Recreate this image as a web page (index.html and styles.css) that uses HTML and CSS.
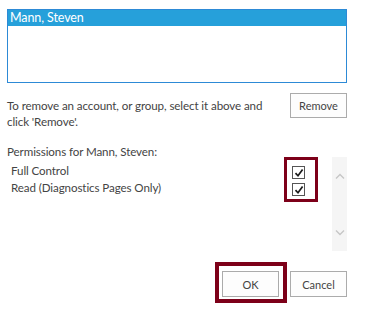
FILE: index.html
```html
<!DOCTYPE html>
<html>
<head>
<meta charset="utf-8">
<link rel="stylesheet" href="styles.css">
</head>
<body>
<div class="page">
  <div class="listbox">
    <div class="sel">Mann, Steven</div>
  </div>
  <div class="remove-row">
    <p class="hint">To remove an account, or group, select it above and<br>click 'Remove'.</p>
    <button class="btn">Remove</button>
  </div>
  <div class="perm-row">
    <div class="perm-left">
      <div class="perm-label">Permissions for Mann, Steven:</div>
      <div class="perm-item">Full Control</div>
      <div class="perm-item">Read (Diagnostics Pages Only)</div>
    </div>
    <div class="checks">
      <span class="cb"><svg viewBox="0 0 10 10" width="10" height="10"><path d="M1.5 5.2 L4 7.8 L8.6 1.6" fill="none" stroke="#1a1a1a" stroke-width="1.7"/></svg></span>
      <span class="cb"><svg viewBox="0 0 10 10" width="10" height="10"><path d="M1.5 5.2 L4 7.8 L8.6 1.6" fill="none" stroke="#1a1a1a" stroke-width="1.7"/></svg></span>
    </div>
    <div class="scroll">
      <svg class="chev" viewBox="0 0 10 6" width="10" height="6"><path d="M1 5.5 L5 1.5 L9 5.5" fill="none" stroke="#c6c6c6" stroke-width="1.4"/></svg>
      <svg class="chev" viewBox="0 0 10 6" width="10" height="6"><path d="M1 0.5 L5 4.5 L9 0.5" fill="none" stroke="#c6c6c6" stroke-width="1.4"/></svg>
    </div>
  </div>
  <div class="footer">
    <div class="focus"><button class="btn">OK</button></div>
    <button class="btn cancel">Cancel</button>
  </div>
</div>
</body>
</html>
```
FILE: styles.css
```css
html, body {
  margin: 0;
  background: #fff;
}
body {
  font-family: Lato, "Noto Sans", sans-serif;
  font-size: 11.6px;
  letter-spacing: -0.1px;
  color: #444;
}
.page {
  padding: 9px 18px 0 7px;
}
.listbox {
  height: 74px;
  box-sizing: border-box;
  border: 1px solid #2d8ad6;
}
.sel {
  height: 16px;
  line-height: 16px;
  background: #26a0da;
  color: #fff;
  padding-left: 2px;
  font-size: 12.5px;
}
.remove-row {
  display: flex;
  justify-content: space-between;
  align-items: flex-start;
  margin-top: 10px;
}
.hint {
  margin: 5px 0 0 0;
  line-height: 16px;
  white-space: nowrap;
}
.btn {
  font-family: inherit;
  font-size: 11px;
  letter-spacing: 0;
  color: #444;
  background: #fdfdfd;
  border: 1px solid #ababab;
  width: 57px;
  height: 25px;
  padding: 0;
  margin: 0;
}
.perm-row {
  display: flex;
  align-items: flex-start;
  margin-top: 14px;
}
.perm-left {
  flex: 1;
  line-height: 16px;
}
.perm-label {
  margin-bottom: 2px;
}
.perm-item {
  padding-left: 4px;
  line-height: 17px;
}
.checks {
  margin-top: 13px;
  width: 23px;
  border: 3px solid #7d0019;
  padding: 6px 0 3px 5px;
  display: flex;
  flex-direction: column;
  gap: 4px;
}
.cb {
  width: 11px;
  height: 11px;
  border: 1px solid #555;
  display: flex;
  align-items: center;
  justify-content: center;
  background: #fff;
}
.scroll {
  margin-top: 13px;
  margin-left: 14px;
  width: 15px;
  height: 94px;
  background: #f5f5f5;
  display: flex;
  flex-direction: column;
  justify-content: space-between;
  align-items: center;
  padding: 16px 0 15px;
  box-sizing: border-box;
}
.footer {
  display: flex;
  justify-content: flex-end;
  align-items: flex-start;
  margin-top: 11px;
}
.focus {
  border: 4px solid #7d0019;
  padding: 5px 4px 2px 3px;
}
.focus .btn, .cancel {
  height: 26px;
}
.cancel {
  margin-top: 9px;
  margin-left: 3px;
}
```
